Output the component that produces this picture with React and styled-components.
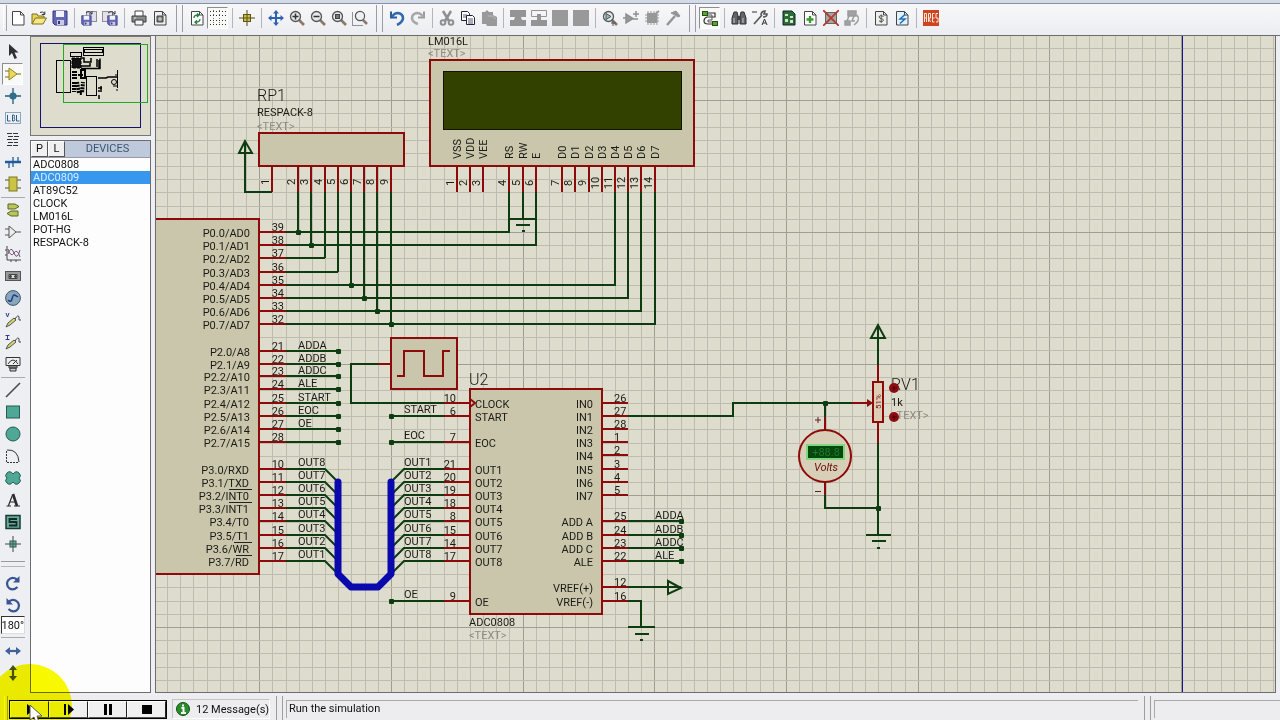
import React from "react";
import styled, { createGlobalStyle, css } from "styled-components";

const paper = "#dedccc";
const body = "#c9c6ab";
const pinRed = "#8c0a0a";
const wireGreen = "#0c3c10";

const Global = createGlobalStyle`
  *, *::before, *::after { box-sizing: border-box; }
  body { margin: 0; background: #eeeff2; font-family: Roboto, "Liberation Sans", sans-serif; font-size: 11px; color: #111; }
  button, input { font: inherit; color: inherit; margin: 0; padding: 0; }
  ul { list-style: none; margin: 0; padding: 0; }
`;

/* ---------- shell ---------- */

const Shell = styled.div`
  position: relative;
  display: flex;
  flex-direction: column;
  min-height: 100vh;
  overflow: hidden;
`;

const TopBar = styled.header`
  display: flex;
  align-items: center;
  height: 36px;
  padding: 0 0 2px 3px;
  flex: none;
  background: linear-gradient(#f8f8fa, #ecedf1);
  border-top: 3px solid #d3dbe7;
  border-bottom: 1px solid #6b6b6b;
  box-shadow: inset 0 1px 0 #8890a4;
  overflow: hidden;
`;

const Grip = styled.span`
  flex: none;
  width: 4px;
  height: 26px;
  border-right: 1px solid #a5a5aa;
  border-left: 1px solid #fff;
`;

const Divider = styled.span`
  flex: none;
  width: 8px;
  height: 20px;
  background: linear-gradient(#b4b4ba, #b4b4ba) 4px 0 / 1px 100% no-repeat;
`;

const GroupBreak = styled.span`
  flex: none;
  width: 16px;
  height: 27px;
  background:
    linear-gradient(#9c9ca2, #9c9ca2) 6px 0 / 1px 100% no-repeat,
    linear-gradient(#9c9ca2, #9c9ca2) 12px 0 / 1px 100% no-repeat;
`;

const pressedLook = css`
  background: #f9f9f7;
  border-color: #8d8d8d #fff #fff #8d8d8d;
`;

const ToolButton = styled.button`
  display: grid;
  place-items: center;
  flex: none;
  width: 21px;
  height: 22px;
  border: 1px solid transparent;
  background: transparent;
  ${(p) => p.$pressed && pressedLook}
  svg { display: block; }
`;

const Main = styled.main`
  display: flex;
  flex: 1;
  min-height: 0;
`;

const ToolColumn = styled.nav`
  display: flex;
  flex-direction: column;
  align-items: center;
  flex: none;
  width: 30px;
  padding: 5px 5px 0 0;
`;

const Rule = styled.span`
  flex: none;
  width: 24px;
  height: ${(p) => (p.$tall ? 6 : 4)}px;
  background: linear-gradient(#a9a9ae, #a9a9ae) 0 50% / 100% 1px no-repeat;
`;

const WideRule = styled.span`
  flex: none;
  width: 24px;
  height: 17px;
  background:
    linear-gradient(#9a9a9f, #9a9a9f) 0 6px / 100% 1px no-repeat,
    linear-gradient(#b5b5ba, #b5b5ba) 0 11px / 100% 1px no-repeat;
`;

const AngleField = styled.input`
  width: 24px;
  height: 18px;
  flex: none;
  border: 1px solid #333;
  border-right-color: #ddd;
  border-bottom-color: #ddd;
  background: #fff;
  text-align: center;
`;

const SidePanel = styled.aside`
  display: flex;
  flex-direction: column;
  flex: none;
  gap: 4px;
  width: 121px;
  padding-bottom: 2px;
`;

const Overview = styled.div`
  flex: none;
  height: 100px;
  border: 1px solid #77777a;
  background: ${paper};
  svg { display: block; }
`;

const DevicePane = styled.section`
  flex: 1;
  border: 1px solid #6d6d70;
  background: #fdfdfd;
`;

const DeviceHead = styled.div`
  display: flex;
  height: 17px;
  background: #bec9db;
  border-bottom: 1px solid #99a;
`;

const HeadButton = styled.button`
  width: 17px;
  height: 16px;
  border: 1px solid #fff;
  border-right-color: #555;
  border-bottom-color: #555;
  background: #f0f0f0;
  line-height: 14px;
`;

const HeadTitle = styled.h2`
  flex: 1;
  margin: 0;
  font-size: 11px;
  font-weight: 400;
  line-height: 16px;
  text-align: center;
  color: #3c5472;
`;

const DeviceItem = styled.button`
  display: block;
  width: 100%;
  height: 13px;
  padding: 0 2px;
  border: 0;
  text-align: left;
  line-height: 13px;
  background: ${(p) => (p.$selected ? "#3796ee" : "transparent")};
  color: ${(p) => (p.$selected ? "#d9efff" : "#111")};
`;

const Canvas = styled.section`
  flex: 1;
  min-width: 0;
  margin: 0 4px 2px 4px;
  border: 1px solid #6d6d70;
  border-top: 0;
  background: ${paper};
  overflow: hidden;
`;

const Sheet = styled.svg`
  display: block;
  width: 100%;
  height: 100%;
  font-family: Roboto, "Liberation Sans", sans-serif;
`;

const StatusBar = styled.footer`
  display: flex;
  align-items: center;
  flex: none;
  height: 25px;
  padding: 3px 0 0 4px;
  background: #ededef;
`;

const Transport = styled.div`
  display: flex;
  margin: 0 5px 0 1px;
  border: 1px solid #000;
  flex: none;
`;

const TransportButton = styled.button`
  display: grid;
  place-items: center;
  width: 39px;
  height: 17px;
  border: 1px solid #fff;
  border-right-color: #222;
  border-bottom-color: #555;
  background: #f0f0f0;
`;

const Messages = styled.button`
  display: flex;
  align-items: center;
  flex: none;
  gap: 6px;
  width: 98px;
  height: 20px;
  padding: 0 3px;
  border: 1px solid #c4c4c6;
  border-right-color: #fff;
  border-bottom-color: #fff;
  background: transparent;
  white-space: nowrap;
  svg { flex: none; }
`;

const StatusText = styled.div`
  flex: ${(p) => (p.$grow ? "1" : "0 0 126px")};
  height: 18px;
  padding: 0 2px;
  border-top: 1px solid #a9a9ab;
  border-left: 1px solid #a9a9ab;
  line-height: 16px;
`;

const Spot = styled.span`
  position: absolute;
  left: -12px;
  bottom: -28px;
  width: 84px;
  height: 84px;
  border-radius: 50%;
  background: #fafa00;
  mix-blend-mode: multiply;
  pointer-events: none;
`;

const Pointer = styled.svg`
  position: absolute;
  left: 29px;
  bottom: -4px;
  pointer-events: none;
`;

/* ---------- icons ---------- */

const S = ({ children, size = 16 }) => (
  <svg width={size} height={size} viewBox="0 0 16 16" fill="none" stroke="#333" aria-hidden="true">
    {children}
  </svg>
);

const Lens = ({ mark }) => (
  <S>
    <path d="M10 10l5 5" stroke="#8a7a6a" strokeWidth="2.6" />
    <circle cx="6.5" cy="6.5" r="5" fill="#e4e8ea" stroke="#555" strokeWidth="1.3" />
    {mark}
  </S>
);

const Page = ({ children, fill = "#fff" }) => (
  <>
    <path d="M2.500 1.500h8l3.500 3.500v10h-11.500z" fill={fill} stroke="#444" />
    <path d="M10.500 1.500v3.500h3.500" stroke="#444" />
    {children}
  </>
);

const Floppy = ({ x = 0, y = 0, k = 1 }) => (
  <g transform={`translate(${x} ${y}) scale(${k})`}>
    <path d="M1 1h14v14H3l-2-2z" fill="#6468b4" stroke="#35357c" />
    <path d="M4 1h8v6H4z" fill="#f2f2fa" stroke="none" />
    <path d="M5 10h7v5H5z" fill="#c9cbe4" stroke="none" />
    <path d="M6 11h2v3H6z" fill="#35357c" stroke="none" />
  </g>
);

const icons = {
  new: <S><Page /></S>,
  open: (
    <S>
      <path d="M1 14V4h5l1 2h6v2" fill="#e8d25e" stroke="#7d6e20" />
      <path d="M1 14l3.500-6H15.500l-3.500 6z" fill="#f5e884" stroke="#7d6e20" />
      <path d="M9 2.500q3-2 4.500 1.500M13.800 1.500v3h-3" stroke="#333" />
    </S>
  ),
  save: <S><Floppy /></S>,
  importSection: (
    <S>
      <rect x="5.500" y="1.500" width="10" height="10" strokeDasharray="1 1" stroke="#333" fill="#dfe0ee" />
      <Floppy x={0} y={5} k={0.68} />
      <path d="M5 3q3-3 6 1M11 1v3H8" stroke="#333" />
    </S>
  ),
  exportSection: (
    <S>
      <rect x="0.500" y="1.500" width="10" height="10" strokeDasharray="1 1" stroke="#333" fill="#e9dfe6" />
      <Floppy x={5} y={5} k={0.68} />
      <path d="M6 3q4-3 7 1M13 1v3h-3" stroke="#333" />
    </S>
  ),
  print: (
    <S>
      <path d="M4 6V1h8v5" fill="#fff" stroke="#444" />
      <path d="M1 6h14v6H1z" fill="#8a8d90" stroke="#3c3c3c" />
      <path d="M4 10h8v5H4z" fill="#f5f5f5" stroke="#3c3c3c" />
      <path d="M3 8h2" stroke="#e4e4e4" />
    </S>
  ),
  printArea: <S><Page fill="#eee"><path d="M5 6h6v6H5z" fill="#777" stroke="#444" /><path d="M6 9h4M8 7v4" stroke="#ddd" /></Page></S>,
  refresh: (
    <S>
      <Page>
        <path d="M5 8q0-3 4-3M8 3.500l2 1.500-2 2M11 9q0 3-4 3M8 10.500l-2 1.500 2 2" stroke="#24803c" strokeWidth="1.300" />
      </Page>
    </S>
  ),
  grid: (
    <S>
      {[1.5, 5.5, 10.5, 14.5].map((y) => (
        <path key={y} d={`M0 ${y}h16`} stroke="#333" strokeDasharray="1 2" />
      ))}
      <path d="M3.500 0v16M9.500 0v16" stroke="#777" strokeDasharray="1 3" />
    </S>
  ),
  origin: <S><path d="M8 0v16M0 8h16" stroke="#4a4a10" /><rect x="4.500" y="4.500" width="7" height="7" fill="#c9bd4c" stroke="#5c5414" /><path d="M8 5v6M5 8h6" stroke="#5c5414" /></S>,
  pan: (
    <S>
      <path d="M8 1v14M1 8h14" stroke="#2f62ad" strokeWidth="2" />
      <path d="M8 0l3 3.500H5zM8 16l3-3.500H5zM0 8l3.500-3v6zM16 8l-3.500-3v6z" fill="#2f62ad" stroke="none" />
    </S>
  ),
  zoomIn: <Lens mark={<path d="M6.500 3.500v6M3.500 6.500h6" stroke="#333" strokeWidth="1.500" />} />,
  zoomOut: <Lens mark={<path d="M3.500 6.500h6" stroke="#333" strokeWidth="1.500" />} />,
  zoomAll: <Lens mark={<rect x="4.500" y="4.500" width="4" height="4" fill="#777" stroke="#444" />} />,
  zoomArea: (
    <S>
      <path d="M0.500 2.500v13h10" strokeDasharray="1 1" />
      <path d="M11 10l4 4" stroke="#8a7a6a" strokeWidth="2.500" />
      <circle cx="8" cy="6" r="4.600" fill="#eef0f2" stroke="#555" strokeWidth="1.200" />
    </S>
  ),
  undo: <S><path d="M2 1.500v6h6" stroke="#2a5c9c" strokeWidth="2" /><path d="M3 7q2-4 6-4 5 1 5 5t-6 7" stroke="#2f68ac" strokeWidth="2.600" /></S>,
  redo: <S><path d="M14 1.500v6H8" stroke="#9c9c9c" strokeWidth="2" /><path d="M13 7q-2-4-6-4-5 1-5 5t6 6" stroke="#a8a8a8" strokeWidth="2.600" /></S>,
  cut: (
    <S>
      <path d="M4 1l6 10M12 1L6 11" stroke="#8f8f8f" strokeWidth="2.500" />
      <circle cx="4" cy="12.500" r="2.300" stroke="#8f8f8f" strokeWidth="2" />
      <circle cx="12" cy="12.500" r="2.300" stroke="#8f8f8f" strokeWidth="2" />
    </S>
  ),
  copy: (
    <S>
      <path d="M1.500 1.500h6l2 2v7h-8z" fill="#fff" stroke="#223" />
      <path d="M3 5h4M3 7h4" stroke="#557" />
      <path d="M6.500 5.500h6l2 2v7h-8z" fill="#fff" stroke="#223" />
      <path d="M8 9h5M8 11h5M8 13h5" stroke="#557" />
    </S>
  ),
  paste: <S><path d="M1 2h3l2-2 2 2h4v3l4 2v9H6l-1-2H1z" fill="#999" stroke="none" /><path d="M6.500 6h5l3 3" stroke="#bbb" /></S>,
  blockCopy: <S><path d="M0 0h16v7h-5l1 3h4v6H0v-6h4l1-3H0z" fill="#949494" stroke="none" /></S>,
  blockMove: <S><path d="M0.500 0.500h15v6h-15z" stroke="#949494" /><path d="M6 4h4v6h6v6H0v-6h6z" fill="#949494" stroke="none" /></S>,
  block: <S><path d="M0 0h16v16H0z" fill="#999" stroke="none" /></S>,
  pick: (
    <Lens mark={<><path d="M4 3.500v6l5-3z" fill="#9abf9a" stroke="#456" /><path d="M11 11v5M9 13h5" stroke="#555" /></>} />
  ),
  makeDevice: <S><path d="M3 4v9l7-4.500zM0 8h3M10 9h5M13 1v6M10 4h6" fill="#999" stroke="#8f8f8f" strokeWidth="1.500" /></S>,
  packaging: (
    <S>
      <path d="M3 3h10v10H3z" fill="#949494" stroke="none" />
      <path d="M4 1v14M7 1v14M10 1v14M13 1v14M1 5h14M1 8h14M1 11h14" stroke="#999" />
      <path d="M10 5l5-4" stroke="#999" strokeWidth="2" />
    </S>
  ),
  hammer: <S><path d="M6 3l5-2 4 5-2 1-3-2z" fill="#949494" stroke="#949494" /><path d="M10 6l-8 9" stroke="#949494" strokeWidth="2.500" /></S>,
  autoroute: (
    <S>
      <path d="M5 3h8v4H5q-3 1-3 4t4 3h5" stroke="#333" strokeWidth="1.200" />
      <path d="M5 5h5v5h-4v2h5" stroke="#555" />
      <rect x="0.500" y="1.500" width="5" height="4" fill="#5ea03f" stroke="#23520f" />
      <rect x="10.500" y="11.500" width="5" height="4" fill="#5ea03f" stroke="#23520f" />
    </S>
  ),
  search: (
    <S>
      <path d="M3 2h3l1 4v8H1V8zM13 2h-3L9 6v8h6V8z" fill="#60656b" stroke="#333" />
      <path d="M6 6h4v4H6z" fill="#444" stroke="none" />
      <path d="M3 8v5M12 8v5" stroke="#c5cace" />
    </S>
  ),
  property: (
    <S>
      <path d="M0 2h5" stroke="#333" />
      <path d="M2 14l8-9M9 5q0-4 4-4l-1 3 3 0q0 3-4 3" stroke="#555" strokeWidth="1.600" />
      <path d="M10 15l2.500-6 2.500 6M11 13h3" stroke="#333" />
    </S>
  ),
  explorer: (
    <S>
      <path d="M2 1h9l3 3v11H2z" fill="#2d6b35" stroke="#123" />
      <path d="M4 4h3v2H4zM9 6h3v2H9zM4 9h3v3H4zM9 10h3v3H9z" fill="#cfe5cf" stroke="none" />
    </S>
  ),
  addSheet: <S><Page><path d="M8 6v7M4.500 9.500h7" stroke="#3b9a2e" strokeWidth="2.400" /></Page></S>,
  removeSheet: (
    <S>
      <rect x="2.500" y="2.500" width="11" height="11" fill="#a7a6a0" stroke="#666" />
      <path d="M0 0l16 16M16 0L0 16" stroke="#b23a30" strokeWidth="1.800" />
    </S>
  ),
  parent: <S><path d="M4 1h8v5H4zM1 11h5v4H1z" fill="#a2a2a2" stroke="#9b9b9b" strokeWidth="1.500" /><path d="M5 6l-2 5M10 6l-2 5h3M13 5q4 5-3 10" stroke="#9b9b9b" strokeWidth="1.500" /></S>,
  bom: <S><Page fill="#eeeeea"><path d="M10.500 6.500q-4-2-4.500.500c0 2 4.500 1 4.500 3.500q-1 2-4.500.500M8.200 4.500v8.500" stroke="#555" /></Page></S>,
  erc: <S><Page fill="#e3f1fa"><path d="M11 4.500L6 9h5l-5 4.500" stroke="#1d6fc0" strokeWidth="1.500" /></Page></S>,
  ares: (
    <S>
      <rect x="0" y="0" width="16" height="16" fill="#cc4420" stroke="none" />
      <path d="M1.500 12V3.500h2V12M1.500 8h2M5.500 12V3.500h2V8h-2l2 4M11.500 3.500h-2V12h2M9.500 8h2M15 3.500h-2V8h2v4h-2" stroke="#ffe9dc" />
    </S>
  ),

  select: <S><path d="M4 0v12l3-3 2.500 6 2.500-1-2.500-5.500h4z" fill="#303030" stroke="none" /></S>,
  component: <S><path d="M0 5h4M0 11h4M11 8h5" stroke="#6d6a1e" /><path d="M4 2v12l8-6z" fill="#ecd75c" stroke="#948524" /></S>,
  junction: <S><path d="M8 0v16M0 8h16" stroke="#275a76" strokeWidth="1.300" /><circle cx="8" cy="8" r="3.600" fill="#2f6d8c" stroke="none" /></S>,
  label: (
    <S>
      <rect x="0.500" y="2.500" width="15" height="11" strokeDasharray="1 1" stroke="#2d5f8b" />
      <path d="M2.500 5v6h3M7.500 5v6h1.500q1.500-1.500 0-3 1-1.500 0-3zM11.500 5v6h3" stroke="#2d5f8b" />
    </S>
  ),
  script: <S><path d="M2 1.500h12M3 4.500h11M2 7.500h12M3 10.500h10M2 13.500h11" stroke="#333" strokeDasharray="5 1" /></S>,
  bus: <S><path d="M0 8h16" stroke="#245a9c" strokeWidth="2.500" /><path d="M4 8v6M8 3v10M13 3v5" stroke="#245a9c" strokeWidth="1.300" /></S>,
  subcircuit: <S><path d="M0 4h16M0 12h16" stroke="#55551e" /><rect x="4" y="1" width="8" height="14" fill="#c9c444" stroke="#7c7822" /></S>,
  terminal: <S><path d="M3 2h7l4 2.500L10 7H3zM13 9H6l-4 2.500L6 14h7z" fill="#b9c65a" stroke="#5b6622" /></S>,
  devicePin: <S><path d="M4 2v12l7-6zM0 5h4M0 11h4M11 8h5" stroke="#555" /></S>,
  graph: (
    <S>
      <path d="M2 0v14h14M0 4h2M0 9h2M6 14v2M11 14v2" stroke="#444" />
      <path d="M3 8q3-9 6-1t6-3" stroke="#4b5c9a" />
      <path d="M3 3q3 9 6 4t6 4" stroke="#a04450" />
    </S>
  ),
  tape: (
    <S>
      <rect x="0.500" y="3.500" width="15" height="9" fill="#9a9a9a" stroke="#555" />
      <path d="M4 6.500h8v4H4z" fill="#ddd" stroke="#444" />
      <circle cx="5.500" cy="8.500" r="1" fill="#444" />
      <circle cx="10.500" cy="8.500" r="1" fill="#444" />
    </S>
  ),
  generator: <S><circle cx="8" cy="8" r="7.400" fill="#8aa6bd" stroke="#3c566c" /><path d="M3 10q3 3 4-1t2-4 4 2" stroke="#1d3d86" strokeWidth="1.500" /></S>,
  vProbe: <S><path d="M1 1l1.500 4L4 1" stroke="#333c8c" /><path d="M1 15l2-4 6-5 2 2-6 5z" fill="#d4d66a" stroke="#555" /><path d="M10 7q3-5 4-2v3h2" stroke="#444" /></S>,
  iProbe: <S><path d="M0.500 1.500h4M2.500 1.500v4M0.500 5.500h4" stroke="#333c8c" /><path d="M1 15l2-4 6-5 2 2-6 5z" fill="#d4d66a" stroke="#555" /><path d="M10 7q3-5 4-2v3h2" stroke="#444" /></S>,
  instrument: (
    <S>
      <path d="M1 1.500h14v8H1z" fill="#eee" />
      <path d="M3 8q5-8 10 0M8 8l4-4" />
      <path d="M4 10h8v2H4zM5 12h6v3H5z" fill="#ccc" />
    </S>
  ),
  line: <S><path d="M1 15L15 1" stroke="#4c4c4c" strokeWidth="1.600" /></S>,
  box: <S><rect x="1.500" y="2" width="13" height="12" fill="#4fa795" stroke="#245c50" /></S>,
  circle: <S><circle cx="8" cy="8" r="7" fill="#4fa795" stroke="#245c50" /></S>,
  arc: <S><path d="M1.500 3v11.500H14" strokeDasharray="2 1" /><path d="M2 2q11-1 12 12" /></S>,
  path: <S><path d="M8 4q3-4 6-1 3 3 0 5 3 3 0 5-3 3-6-1-3 4-6 1-3-2 0-5-3-2 0-5 3-3 6 1z" fill="#4fa795" stroke="#245c50" /></S>,
  text: <S><path d="M7.500 3L3.500 13.500M5 10h5M1.500 14h4.500M9 14h6" stroke="#2b2b2b" strokeWidth="1.200" /><path d="M8 2l4 12" stroke="#2b2b2b" strokeWidth="2.600" /></S>,
  symbol: <S><rect x="1" y="1.500" width="14" height="13" fill="#6fa69a" stroke="#123c34" strokeWidth="1.500" /><path d="M12 5H4.500v3H11.500v3.500H4" stroke="#0f2d28" strokeWidth="1.800" /></S>,
  marker: <S><path d="M8 0v16M0 8h16" stroke="#444" /><rect x="5" y="5" width="6" height="6" fill="#7faaa0" stroke="#2c5d52" /><path d="M8 5v6M5 8h6" stroke="#2c5d52" /></S>,
  cw: <S><path d="M12.500 12q-4 4-8 1.500-4-3.500-1.500-8 4-4.500 9-1" stroke="#3b5592" strokeWidth="2.200" /><path d="M14.500 1v6.500H8z" fill="#3b5592" stroke="none" /></S>,
  ccw: <S><path d="M3.500 12q4 4 8 1.500 4-3.500 1.500-8-4-4.500-9-1" stroke="#3b5592" strokeWidth="2.200" /><path d="M1.500 1v6.500h6.500z" fill="#3b5592" stroke="none" /></S>,
  mirrorX: <S><path d="M3 8h10" stroke="#42609c" strokeWidth="2.200" /><path d="M0 8l5-4v8zM16 8l-5-4v8z" fill="#42609c" stroke="none" /></S>,
  mirrorY: <S><path d="M8 3v10" stroke="#45532a" strokeWidth="2.200" /><path d="M8 0L4 5h8zM8 16l-4-5h8z" fill="#45532a" stroke="none" /></S>,
};

const topTools = [
  ["new", "New design"], ["open", "Open design"], ["save", "Save design"], "|",
  ["importSection", "Import section"], ["exportSection", "Export section"], "|",
  ["print", "Print"], ["printArea", "Mark output area"], "||",
  ["refresh", "Redraw"], ["grid", "Toggle grid", true], "|",
  ["origin", "False origin"], "|",
  ["pan", "Centre at cursor"], ["zoomIn", "Zoom in"], ["zoomOut", "Zoom out"], ["zoomAll", "View entire sheet"], ["zoomArea", "Zoom to area"], "||",
  ["undo", "Undo"], ["redo", "Redo"], "|",
  ["cut", "Cut"], ["copy", "Copy"], ["paste", "Paste"], "|",
  ["blockCopy", "Block copy"], ["blockMove", "Block move"], ["block", "Block rotate"], ["block", "Block delete"], "|",
  ["pick", "Pick parts"], ["makeDevice", "Make device"], ["packaging", "Packaging tool"], ["hammer", "Decompose"], "||",
  ["autoroute", "Wire autorouter", true], "|",
  ["search", "Search and tag"], ["property", "Property assignment"], "|",
  ["explorer", "Design explorer"], ["addSheet", "New sheet"], ["removeSheet", "Remove sheet"], ["parent", "Exit to parent sheet"], "|",
  ["bom", "Bill of materials"], ["erc", "Electrical rule check"], "|",
  ["ares", "Netlist to ARES"],
];

const modeTools = [
  ["select", "Selection"], ["component", "Component", true], ["junction", "Junction dot"], ["label", "Wire label"],
  ["script", "Text script"], ["bus", "Buses"], ["subcircuit", "Subcircuit"], "-",
  ["terminal", "Terminals"], ["devicePin", "Device pins"], ["graph", "Graph"], ["tape", "Tape recorder"],
  ["generator", "Generator"], ["vProbe", "Voltage probe"], ["iProbe", "Current probe"], ["instrument", "Instruments"], "-",
  ["line", "Line"], ["box", "Box"], ["circle", "Circle"], ["arc", "Arc"], ["path", "Closed path"],
  ["text", "Text"], ["symbol", "Symbols"], ["marker", "Markers"],
];

const devices = ["ADC0808", "ADC0809", "AT89C52", "CLOCK", "LM016L", "POT-HG", "RESPACK-8"];

/* ---------- schematic ---------- */

const Wire = styled.path`
  fill: none;
  stroke: ${wireGreen};
  stroke-width: 2;
`;
const Pin = styled.path`
  fill: none;
  stroke: ${pinRed};
  stroke-width: 2;
`;
const Bus = styled.path`
  fill: none;
  stroke: #0909ae;
  stroke-width: 7;
  stroke-linecap: round;
  stroke-linejoin: round;
`;
const Part = styled.rect`
  fill: ${(p) => (p.$pale ? "#dccfb6" : body)};
  stroke: ${pinRed};
  stroke-width: 2;
`;
const Label = styled.text`
  font-size: ${(p) => (p.$big ? 16 : 11)}px;
  font-weight: ${(p) => (p.$big ? 300 : 400)};
  fill: ${(p) => (p.$faint ? "#8d8c80" : "#1b1b16")};
  text-anchor: ${(p) => p.$anchor || "start"};
`;
const Meter = styled.circle`
  fill: #d8cfb8;
  stroke: ${pinRed};
  stroke-width: 2;
`;

const Dot = ({ x, y }) => <rect x={x - 2} y={y - 2} width="5" height="5" rx="1" fill={wireGreen} />;

const Upright = ({ x, y, children, anchor }) => (
  <Label $anchor={anchor} transform={`translate(${x} ${y}) rotate(-90)`}>{children}</Label>
);

const p0 = [232, 245, 258, 272, 285, 298, 311, 324];
const p2 = [351, 364, 376, 389, 403, 416, 429, 442];
const p3 = [469, 482, 495, 508, 521, 535, 548, 561];
const p3Names = ["RXD", "TXD", "INT0", "INT1", "T0", "T1", "WR", "RD"];
const nets = ["ADDA", "ADDB", "ADDC", "ALE", "START", "EOC", "OE", ""];
const packX = [298, 311, 325, 338, 351, 364, 377, 391];
const outPins = [21, 20, 19, 18, 8, 15, 14, 17];
const lcdPins = [
  [457, "VSS"], [470, "VDD"], [483, "VEE"], [509, "RS"], [523, "RW"], [536, "E"], [562, "D0"],
  [575, "D1"], [589, "D2"], [602, "D3"], [615, "D4"], [628, "D5"], [641, "D6"], [655, "D7"],
];
const adcLeft = [[403, "CLOCK", 10], [416, "START", 6], [442, "EOC", 7], ...p3.map((y, i) => [y, `OUT${i + 1}`, outPins[i]]), [601, "OE", 9]];
const adcRight = [
  [403, "IN0", 26], [416, "IN1", 27], [429, "IN2", 28], [442, "IN3", 1], [455, "IN4", 2], [469, "IN5", 3],
  [482, "IN6", 4], [495, "IN7", 5], [521, "ADD A", 25], [535, "ADD B", 24], [548, "ADD C", 23], [561, "ALE", 22],
  [587, "VREF(+)", 12], [601, "VREF(-)", 16],
];

const Grid = () => {
  const steps = Array.from({ length: 200 }, (_, i) => i);
  const major = (i) => (i % 10 === 0 ? "#9f9e91" : "#bdbcae");
  return (
    <g shapeRendering="crispEdges" strokeWidth="1">
      {steps.map((i) => {
        const x = Math.round(127.5 + i * 13.17) + 0.5;
        return <line key={i} x1={x} x2={x} y1="0" y2="2700" stroke={major(i)} />;
      })}
      {steps.map((i) => {
        const y = Math.round(-31.5 + i * 13.17) + 0.5;
        return <line key={i} x1="0" x2="2700" y1={y} y2={y} stroke={major(i)} />;
      })}
    </g>
  );
};

const Controller = () => (
  <g>
    <Part x="100" y="219" width="159" height="355" />
    {p0.map((y, i) => (
      <g key={y}>
        <Label x="250" y={y + 5} $anchor="end">{`P0.${i}/AD${i}`}</Label>
        <Label x="284" y={y - 1} $anchor="end">{39 - i}</Label>
        <Pin d={`M259 ${y}H286`} />
      </g>
    ))}
    {p2.map((y, i) => (
      <g key={y}>
        <Label x="250" y={y + 5} $anchor="end">{`P2.${i}/A${i + 8}`}</Label>
        <Label x="284" y={y - 1} $anchor="end">{21 + i}</Label>
        {nets[i] && <Label x="298" y={y - 2}>{nets[i]}</Label>}
        <Pin d={`M259 ${y}H286`} />
        <Wire d={`M286 ${y}H338`} />
        <Dot x={338} y={y} />
      </g>
    ))}
    {p3.map((y, i) => (
      <g key={y}>
        <Label x="249" y={y + 5} $anchor="end">{`P3.${i}/${p3Names[i]}`}</Label>
        <Label x="284" y={y - 1} $anchor="end">{10 + i}</Label>
        <Label x="298" y={y - 3}>{`OUT${8 - i}`}</Label>
        <Pin d={`M259 ${y}H286`} />
        <Wire d={`M286 ${y}H325L338 ${y + 13}`} />
      </g>
    ))}
    <path d="M229 489.500H252M229 502.500H252M234 542.500H252M236 555.500H252" stroke="#222" fill="none" />
  </g>
);

const ResistorPack = () => (
  <g>
    <Label x="257" y="101" $big>RP1</Label>
    <Label x="257" y="116">RESPACK-8</Label>
    <Label x="257" y="130" $faint>&lt;TEXT&gt;</Label>
    <Part x="259" y="133" width="145" height="33" />
    <Pin d="M272 166V192" />
    <Upright x={269} y={182} anchor="middle">1</Upright>
    {packX.map((x, i) => (
      <g key={x}>
        <Wire d={`M${x} 192V${p0[i]}`} />
        <Pin d={`M${x} 166V192`} />
        <Upright x={x - 3} y={182} anchor="middle">{i + 2}</Upright>
      </g>
    ))}
    <Wire d="M272 192H245V141M239 153L245 141L252 153Z" />
  </g>
);

const Lcd = () => (
  <g>
    <Label x="428" y="45">LM016L</Label>
    <Label x="428" y="57" $faint>&lt;TEXT&gt;</Label>
    <Part x="430" y="60" width="264" height="106" />
    <rect x="443.500" y="71.500" width="238" height="58" fill="#334100" stroke="#101500" />
    {lcdPins.map(([x, name], i) => (
      <g key={name}>
        <Upright x={x + 4} y={159}>{name}</Upright>
        <Upright x={x - 3} y={183} anchor="middle">{i + 1}</Upright>
        <Pin d={`M${x} 166V192`} />
      </g>
    ))}
  </g>
);

const DataWires = () => (
  <g>
    <Wire d="M286 232H509V192M286 245H536V192M286 258H325M286 272H338" />
    <Wire d="M286 285H615V192M286 298H628V192M286 311H641V192M286 324H655V192" />
    <Wire d="M523 192V219M509 219H536M516 225H530M522 231H525" />
    {[0, 1, 4, 5, 6, 7].map((i) => <Dot key={i} x={packX[i]} y={p0[i]} />)}
  </g>
);

const Clock = () => (
  <g>
    <Part x="391" y="338" width="66" height="51" />
    <Pin d="M397 376H404V351H424V376H443V351H450" />
    <Wire d="M378 364H351V403H444" />
    <Pin d="M378 364H391" />
  </g>
);

const Adc = () => (
  <g>
    <Label x="469" y="385" $big>U2</Label>
    <Part x="470" y="389" width="132" height="225" />
    {adcLeft.map(([y, name, pin]) => (
      <g key={name}>
        <Label x="475" y={y + 5}>{name}</Label>
        <Label x="456" y={y - 1} $anchor="end">{pin}</Label>
        <Pin d={`M444 ${y}H470`} />
      </g>
    ))}
    <Pin d="M470 399L475 403L470 407" />
    {[["START", 416], ["EOC", 442], ["OE", 601]].map(([name, y]) => (
      <g key={name}>
        <Label x="404" y={y - 3}>{name}</Label>
        <Wire d={`M391 ${y}H444`} />
        <Dot x={391} y={y} />
      </g>
    ))}
    {p3.map((y, i) => (
      <g key={y}>
        <Label x="404" y={y - 3}>{`OUT${i + 1}`}</Label>
        <Wire d={`M391 ${y + 13}L404 ${y}H444`} />
      </g>
    ))}
    {adcRight.map(([y, name, pin]) => (
      <g key={name}>
        <Label x="593" y={y + 5} $anchor="end">{name}</Label>
        <Label x="614" y={y - 1}>{pin}</Label>
        <Pin d={`M602 ${y}H628`} />
      </g>
    ))}
    {[["ADDA", 521], ["ADDB", 535], ["ADDC", 548], ["ALE", 561]].map(([name, y]) => (
      <g key={name}>
        <Label x="655" y={y - 2}>{name}</Label>
        <Wire d={`M628 ${y}H681`} />
        <Dot x={681} y={y} />
      </g>
    ))}
    <Wire d="M628 587H681M668 581L681 588L668 594Z" />
    <Wire d="M628 601H641V627M628 627H655M635 634H649M640 640H643" />
    <Label x="469" y="626">ADC0808</Label>
    <Label x="469" y="639" $faint>&lt;TEXT&gt;</Label>
  </g>
);

const Voltmeter = () => (
  <g>
    <Wire d="M628 416H733V403H852M825 403V417M825 495V508H878" />
    <Pin d="M825 417V430M825 482V495" />
    <Meter cx="825" cy="456" r="26" />
    <rect x="806" y="444" width="39" height="16" fill="#7fd77c" />
    <rect x="808" y="446" width="35" height="12" fill="#06480f" />
    <text x="826" y="456" fontSize="11" textAnchor="middle" fill="#24772c">+88.8</text>
    <text x="826" y="471" fontSize="11" fontStyle="italic" textAnchor="middle" fill="#6b0d0d">Volts</text>
    <path d="M815 420H821M818 417V423M815 491.500H821" stroke="#5b2020" fill="none" />
    <Dot x={825} y={403} />
  </g>
);

const Potentiometer = () => (
  <g>
    <Label x="891" y="390" $big>RV1</Label>
    <Label x="891" y="406">1k</Label>
    <Label x="891" y="419" $faint>&lt;TEXT&gt;</Label>
    <Wire d="M878 365V326M871 338L878 325L885 338ZM878 443V535M866 535H891M872 541H886M877 548H880" />
    <Pin d="M878 365V382M878 422V443M852 403H870" />
    <path d="M867 399L873 403L867 407Z" fill={pinRed} />
    <Part x="873" y="382" width="10" height="40" $pale />
    <text transform="translate(881 409) rotate(-90)" fontSize="8" fill="#7d1010">51%</text>
    {[388, 417].map((y) => (
      <g key={y}>
        <circle cx="894" cy={y} r="5" fill="#8e0c12" />
        <path d={`M892 ${y}h5M894 ${y - 2}v5`} stroke="#4a0508" fill="none" />
      </g>
    ))}
    <Dot x={878} y={508} />
  </g>
);

const Thumbnail = () => (
  <svg width="119" height="98" viewBox="31 37 119 98" fill="none" stroke="#000" aria-hidden="true">
    <rect x="40.500" y="43.500" width="100" height="84" stroke="#14146e" />
    <rect x="56.500" y="60.500" width="14" height="32" />
    <rect x="83.500" y="47.500" width="20" height="8" />
    <rect x="84.500" y="49.500" width="18" height="3" />
    <rect x="70.500" y="52.500" width="11" height="4" />
    <path d="M72 58h9v10h-9z" fill="#111" strokeDasharray="3 1" />
    <path d="M81 58h3v4h7v-4M81 66h9v-3M81 68.500h19v-10M97 59v8M99 60v8" strokeWidth="1.500" />
    <path d="M81 70h4v8h-4zM72 72h5M72 75h5M72 78h5M78 75h5" strokeWidth="2" />
    <path d="M74 82v10M77 82l2 11h3l1-11" strokeWidth="4" strokeDasharray="2 1" />
    <rect x="86.500" y="76.500" width="10" height="19" />
    <path d="M98 78h8l2-1h9M98 88h4M98 91h4M99 95v4M101 86v4" strokeWidth="1.500" />
    <circle cx="114" cy="82" r="2.500" />
    <path d="M117.500 70v18M115 75h3M113 86h5M117 89v2" />
    <rect x="63.500" y="44.500" width="84" height="58" stroke="#22aa22" />
  </svg>
);

/* ---------- app ---------- */

export default function App() {
  return (
    <Shell>
      <Global />
      <TopBar>
        <Grip />
        {topTools.map((t, i) =>
          t === "|" ? <Divider key={i} /> : t === "||" ? <GroupBreak key={i} /> : (
            <ToolButton key={i} aria-label={t[1]} aria-pressed={t[2]} $pressed={t[2]}>{icons[t[0]]}</ToolButton>
          )
        )}
      </TopBar>

      <Main>
        <ToolColumn aria-label="Modes">
          {modeTools.map((t, i) =>
            t === "-" ? <Rule key={i} /> : (
              <ToolButton key={i} aria-label={t[1]} aria-pressed={t[2]} $pressed={t[2]}>{icons[t[0]]}</ToolButton>
            )
          )}
          <WideRule />
          <ToolButton aria-label="Rotate clockwise">{icons.cw}</ToolButton>
          <ToolButton aria-label="Rotate anticlockwise">{icons.ccw}</ToolButton>
          <AngleField aria-label="Rotation angle" defaultValue="180°" />
          <Rule $tall />
          <ToolButton aria-label="Mirror horizontally">{icons.mirrorX}</ToolButton>
          <ToolButton aria-label="Mirror vertically">{icons.mirrorY}</ToolButton>
        </ToolColumn>

        <SidePanel>
          <Overview><Thumbnail /></Overview>
          <DevicePane>
            <DeviceHead>
              <HeadButton aria-label="Pick devices">P</HeadButton>
              <HeadButton aria-label="Library manager">L</HeadButton>
              <HeadTitle>DEVICES</HeadTitle>
            </DeviceHead>
            <ul>
              {devices.map((d) => (
                <li key={d}><DeviceItem $selected={d === "ADC0809"}>{d}</DeviceItem></li>
              ))}
            </ul>
          </DevicePane>
        </SidePanel>

        <Canvas aria-label="Schematic">
          <Sheet>
            <g transform="translate(-156 -36)">
              <Grid />
              <path d="M1182.500 0V2700" stroke="#15158c" />
              <Controller />
              <DataWires />
              <ResistorPack />
              <Lcd />
              <Clock />
              <Adc />
              <Bus d="M338 482V574L351 587H378L391 574V482" />
              <Potentiometer />
              <Voltmeter />
            </g>
          </Sheet>
        </Canvas>
      </Main>

      <StatusBar>
        <Grip />
        <Transport>
          <TransportButton aria-label="Play">
            <svg width="12" height="11"><path d="M3 0l7 5.500-7 5.500z" /></svg>
          </TransportButton>
          <TransportButton aria-label="Step">
            <svg width="12" height="11"><path d="M1 0h2v11H1zM5 0l6 5.500-6 5.500z" /></svg>
          </TransportButton>
          <TransportButton aria-label="Pause">
            <svg width="12" height="11"><path d="M2 0h3v11H2zM7 0h3v11H7z" /></svg>
          </TransportButton>
          <TransportButton aria-label="Stop">
            <svg width="12" height="11"><path d="M1 1h10v9H1z" /></svg>
          </TransportButton>
        </Transport>
        <Messages>
          <svg width="14" height="14" aria-hidden="true">
            <circle cx="7" cy="7" r="6.500" fill="#2a8c2a" stroke="#145214" />
            <path d="M7 2.500v2M5.500 6H7.500v5M5 11h5" stroke="#fff" strokeWidth="2" fill="none" />
          </svg>
          12 Message(s)
        </Messages>
        <GroupBreak />
        <StatusText $grow>Run the simulation</StatusText>
        <GroupBreak />
        <StatusText />
      </StatusBar>

      <Spot />
      <Pointer width="14" height="20" viewBox="0 0 14 20" aria-hidden="true">
        <path d="M1 1v15l4-3 2 6 3-1-2-6h5z" fill="#fff" stroke="#555" />
      </Pointer>
    </Shell>
  );
}
